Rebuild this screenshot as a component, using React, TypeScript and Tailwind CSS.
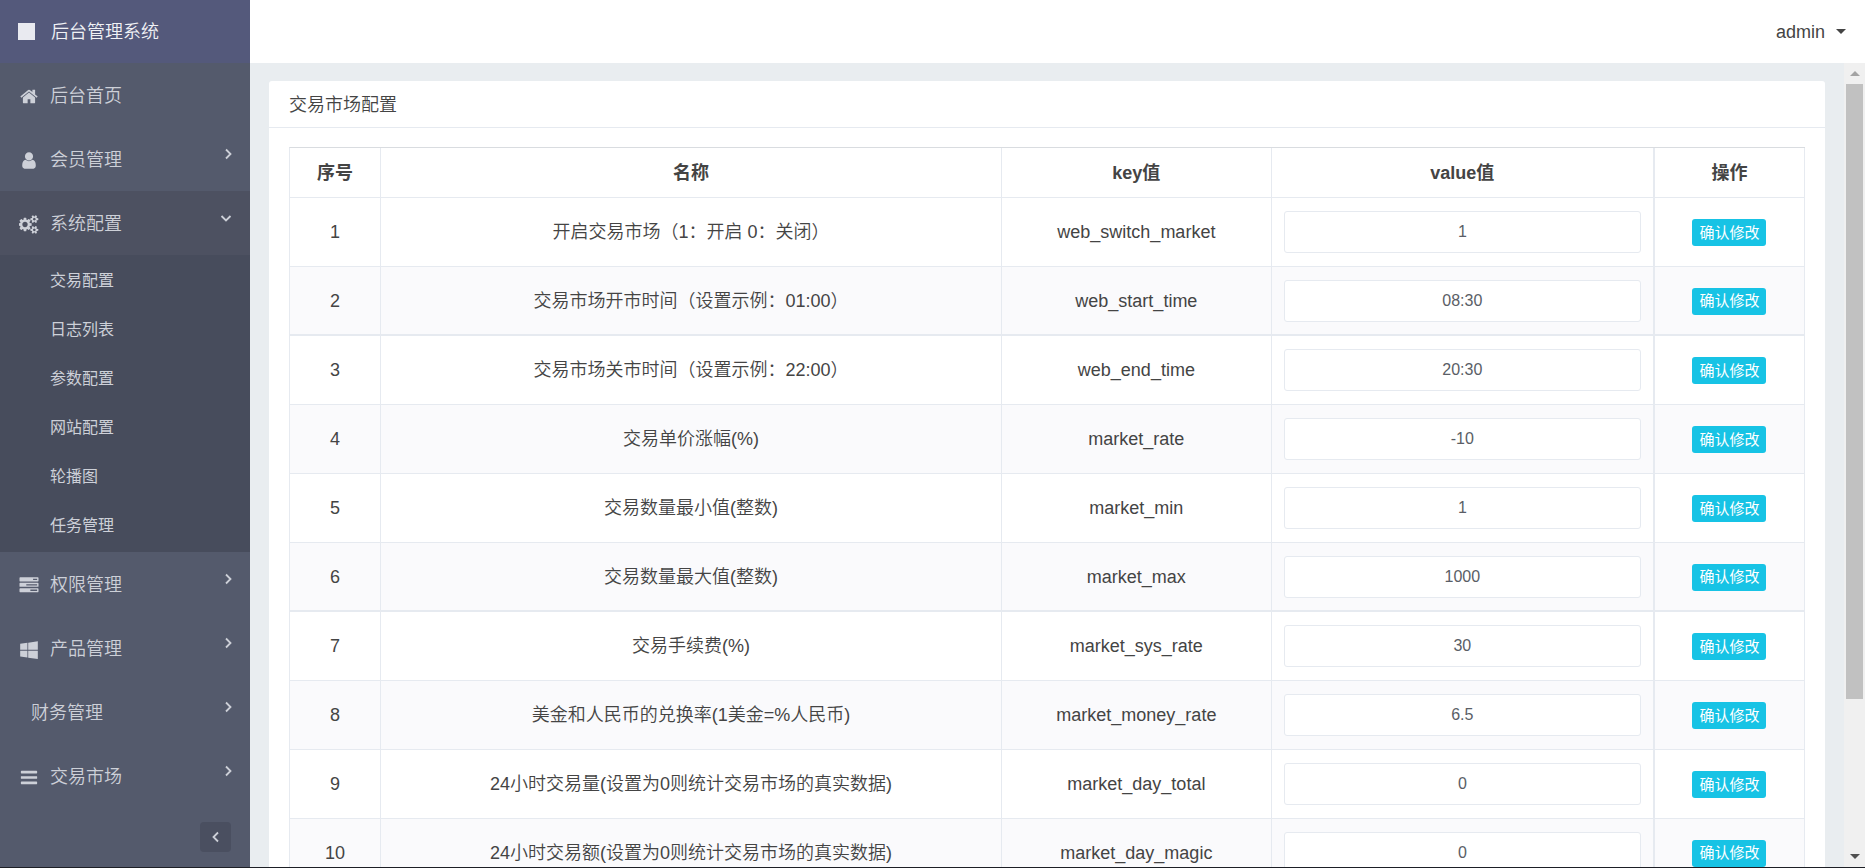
import React, { useState } from "react";

const FONT =
  "font-['Liberation_Sans','Noto_Sans_CJK_SC',sans-serif]";

function Glyph({ d, viewBox = "0 0 1792 1792" }: { d: string; viewBox?: string }) {
  return (
    <svg viewBox={viewBox} className="h-[19px] w-5 shrink-0" fill="currentColor" aria-hidden="true">
      <path d={d} />
    </svg>
  );
}

const HOME =
  "M1472 992v480q0 26-19 45t-45 19h-384v-384h-256v384h-384q-26 0-45-19t-19-45v-480q0-1 .5-3t.5-3l575-474 575 474q1 2 1 6zm223-69l-62 74q-8 9-21 11h-3q-13 0-21-7l-692-577-692 577q-12 8-24 7-13-2-21-11l-62-74q-8-10-7-23.5t11-21.5l719-599q32-26 76-26t76 26l244 204v-195q0-14 9-23t23-9h192q14 0 23 9t9 23v408l219 182q10 8 11 21.5t-7 23.5z";
const USER =
  "M1536 1399q0 109-62.5 187t-150.5 78h-854q-88 0-150.5-78t-62.5-187q0-85 8.5-160.5t31.5-152 58.5-131 94-89 134.5-34.5q131 128 313 128t313-128q76 0 134.5 34.5t94 89 58.5 131 31.5 152 8.5 160.5zm-256-887q0 159-112.5 271.5t-271.5 112.5-271.5-112.5-112.5-271.5 112.5-271.5 271.5-112.5 271.5 112.5 112.5 271.5z";
const COGS =
  "M832 896q0-106-75-181t-181-75-181 75-75 181 75 181 181 75 181-75 75-181zm768 512q0-52-38-90t-90-38-90 38-38 90q0 53 37.5 90.5t90.5 37.5 90.5-37.5 37.5-90.5zm0-1024q0-52-38-90t-90-38-90 38-38 90q0 53 37.5 90.5t90.5 37.5 90.5-37.5 37.5-90.5zm-384 421v185q0 10-7 19.5t-16 10.5l-155 24q-11 35-32 76 34 48 90 115 7 11 7 20 0 12-7 19-23 30-82.5 89.5t-78.5 59.5q-11 0-21-7l-115-90q-37 19-77 31-11 108-23 155-7 24-30 24h-186q-11 0-20-7.5t-10-17.5l-23-153q-34-10-75-31l-118 89q-7 7-20 7-11 0-21-8-144-133-144-160 0-9 7-19 10-14 41-53t47-61q-23-44-35-82l-152-24q-10-1-17-9.5t-7-19.5v-185q0-10 7-19.5t16-10.5l155-24q11-35 32-76-34-48-90-115-7-11-7-20 0-12 7-20 22-30 82-89t79-59q11 0 21 7l115 90q34-18 77-32 11-108 23-154 7-24 30-24h186q11 0 20 7.5t10 17.5l23 153q34 10 75 31l118-89q8-7 20-7 11 0 21 8 144 133 144 160 0 8-7 19-12 16-42 54t-45 60q23 48 34 82l152 23q10 2 17 10.5t7 19.5zm640 533v140q0 16-149 31-12 27-30 52 51 113 51 138 0 4-4 7-122 71-124 71-8 0-46-47t-52-68q-20 2-30 2t-30-2q-14 21-52 68t-46 47q-2 0-124-71-4-3-4-7 0-25 51-138-18-25-30-52-149-15-149-31v-140q0-16 149-31 13-29 30-52-51-113-51-138 0-4 4-7 4-2 35-20t59-34 30-16q8 0 46 46.5t52 67.5q20-2 30-2t30 2q51-71 92-112l6-2q4 0 124 70 4 3 4 7 0 25-51 138 17 23 30 52 149 15 149 31zm0-1024v140q0 16-149 31-12 27-30 52 51 113 51 138 0 4-4 7-122 71-124 71-8 0-46-47t-52-68q-20 2-30 2t-30-2q-14 21-52 68t-46 47q-2 0-124-71-4-3-4-7 0-25 51-138-18-25-30-52-149-15-149-31v-140q0-16 149-31 13-29 30-52-51-113-51-138 0-4 4-7 4-2 35-20t59-34 30-16q8 0 46 46.5t52 67.5q20-2 30-2t30 2q51-71 92-112l6-2q4 0 124 70 4 3 4 7 0 25-51 138 17 23 30 52 149 15 149 31z";
const TASKS =
  "M1024 1408h640v-128h-640v128zm-384-512h1024v-128h-1024v128zm640-512h384v-128h-384v128zm512 832v256q0 26-19 45t-45 19h-1664q-26 0-45-19t-19-45v-256q0-26 19-45t45-19h1664q26 0 45 19t19 45zm0-512v256q0 26-19 45t-45 19h-1664q-26 0-45-19t-19-45v-256q0-26 19-45t45-19h1664q26 0 45 19t19 45zm0-512v256q0 26-19 45t-45 19h-1664q-26 0-45-19t-19-45v-256q0-26 19-45t45-19h1664q26 0 45 19t19 45z";
const WINDOWS =
  "M746 1006v651l-682-94v-557h682zm0-743v659h-682v-565zm982 743v786l-907-125v-661h907zm0-878v794h-907v-669z";
const BARS =
  "M1664 1344v128q0 26-19 45t-45 19h-1408q-26 0-45-19t-19-45v-128q0-26 19-45t45-19h1408q26 0 45 19t19 45zm0-512v128q0 26-19 45t-45 19h-1408q-26 0-45-19t-19-45v-128q0-26 19-45t45-19h1408q26 0 45 19t19 45zm0-512v128q0 26-19 45t-45 19h-1408q-26 0-45-19t-19-45v-128q0-26 19-45t45-19h1408q26 0 45 19t19 45z";

type Item = { label: string; icon?: string; viewBox?: string; arrow?: boolean; children?: string[] };

const MENU: Item[] = [
  { label: "后台首页", icon: HOME },
  { label: "会员管理", icon: USER, arrow: true },
  {
    label: "系统配置",
    icon: COGS,
    viewBox: "0 0 1920 1792",
    arrow: true,
    children: ["交易配置", "日志列表", "参数配置", "网站配置", "轮播图", "任务管理"],
  },
  { label: "权限管理", icon: TASKS, arrow: true },
  { label: "产品管理", icon: WINDOWS, arrow: true },
  { label: "财务管理", arrow: true },
  { label: "交易市场", icon: BARS, arrow: true },
];

const ROWS: [string, string, string][] = [
  ["开启交易市场（1：开启 0：关闭）", "web_switch_market", "1"],
  ["交易市场开市时间（设置示例：01:00）", "web_start_time", "08:30"],
  ["交易市场关市时间（设置示例：22:00）", "web_end_time", "20:30"],
  ["交易单价涨幅(%)", "market_rate", "-10"],
  ["交易数量最小值(整数)", "market_min", "1"],
  ["交易数量最大值(整数)", "market_max", "1000"],
  ["交易手续费(%)", "market_sys_rate", "30"],
  ["美金和人民币的兑换率(1美金=%人民币)", "market_money_rate", "6.5"],
  ["24小时交易量(设置为0则统计交易市场的真实数据)", "market_day_total", "0"],
  ["24小时交易额(设置为0则统计交易市场的真实数据)", "market_day_magic", "0"],
];

function Angle({ dir }: { dir: "right" | "down" | "left" }) {
  const d = dir === "right" ? "M4 1.5 8.5 6 4 10.5" : dir === "left" ? "M8 1.5 3.5 6 8 10.5" : "M-.5 4 4 8.5 8.5 4";
  return (
    <svg viewBox="0 0 12 12" className="size-3 overflow-visible" fill="none" stroke="currentColor" strokeWidth="1.8" aria-hidden="true">
      <path d={d} />
    </svg>
  );
}

function Sidebar() {
  return (
    <aside className="flex w-[250px] shrink-0 flex-col bg-[#545a6c] text-[#cdd0d8]">
      <a href="#" className="flex h-[63px] shrink-0 items-center gap-4 bg-[#54597b] pl-[18px] text-lg text-[#f0f1f5]">
        <span className="size-[17px] bg-[#e9eaf0]" />
        后台管理系统
      </a>
      <nav>
        <ul>
          {MENU.map((m) => (
            <li key={m.label} className={m.children ? "bg-[#4d5161]" : ""}>
              <a href="#" className={`flex h-16 items-center gap-[11px] pt-0.5 pr-4 text-lg ${m.icon ? "pl-[19px]" : "pl-[31px]"}`}>
                {m.icon && <Glyph d={m.icon} viewBox={m.viewBox} />}
                <span className="flex-1">{m.label}</span>
                {m.arrow && (
                  <span className="pb-3">
                    <Angle dir={m.children ? "down" : "right"} />
                  </span>
                )}
              </a>
              {m.children && (
                <ul className="bg-[#474c5c] pt-px pb-0.5">
                  {m.children.map((c) => (
                    <li key={c}>
                      <a href="#" className="flex h-[49px] items-center pl-[50px] text-base font-normal">
                        {c}
                      </a>
                    </li>
                  ))}
                </ul>
              )}
            </li>
          ))}
        </ul>
      </nav>
      <div className="mt-auto flex justify-end pr-[19px] pb-[15px]">
        <button type="button" aria-label="收起菜单" className="flex h-[30px] w-[31px] items-center justify-center rounded-sm bg-[#4a4f60]">
          <Angle dir="left" />
        </button>
      </div>
    </aside>
  );
}

function ConfigRow({ index, row }: { index: number; row: [string, string, string] }) {
  const [value, setValue] = useState(row[2]);
  const cell = `border-r border-[#e6eaf0] ${index % 4 === 1 ? "border-b-2" : "border-b"}`;
  return (
    <tr className={`h-[69px] ${index % 2 ? "bg-[#fafafc]" : "bg-white"}`}>
      <td className={cell}>{index + 1}</td>
      <td className={cell}>{row[0]}</td>
      <td className={cell}>{row[1]}</td>
      <td className={`${cell} border-r-2 px-3`}>
        <input
          aria-label={row[1]}
          value={value}
          onChange={(e) => setValue(e.target.value)}
          className="block h-[42px] w-full rounded-[3px] border border-[#e6eaf0] bg-white text-center text-base text-[#5a5e66] outline-none"
        />
      </td>
      <td className={cell}>
        <button type="button" className="h-[27px] rounded-[3px] bg-[#17c3e5] px-[7px] align-middle text-[15px] leading-[26px] font-normal text-white">
          确认修改
        </button>
      </td>
    </tr>
  );
}

export default function App() {
  const th = "border-r border-b border-[#e6eaf0] font-bold";
  return (
    <div className={`flex h-screen overflow-hidden border-b border-[#1d1f26] font-[350] text-[#444] ${FONT}`}>
      <Sidebar />
      <div className="flex min-w-0 flex-1 flex-col">
        <header className="flex h-[63px] shrink-0 items-center justify-end bg-white pr-[19px]">
          <button type="button" className="flex items-center gap-[11px] text-lg">
            admin
            <svg viewBox="0 0 10 5" className="h-[5px] w-2.5" fill="currentColor" aria-hidden="true">
              <path d="M0 0h10L5 5z" />
            </svg>
          </button>
        </header>
        <div className="flex min-h-0 flex-1">
          <main className="min-w-0 flex-1 overflow-hidden bg-[#e9edf0] px-[19px] pt-[18px]">
            <section className="rounded-[3px] bg-white">
              <h1 className="flex h-[47px] items-center border-b border-[#e6eaf0] px-5 pt-0.5 text-lg font-[350]">交易市场配置</h1>
              <div className="px-5 py-[19px]">
                <table className="w-full table-fixed border-separate border-spacing-0 border-t border-l border-t-[#d9dce0] border-l-[#e6eaf0] text-center text-lg">
                  <colgroup>
                    <col className="w-[6%]" />
                    <col className="w-[41%]" />
                    <col className="w-[17.8%]" />
                    <col className="w-[25.3%]" />
                    <col />
                  </colgroup>
                  <thead>
                    <tr className="h-[50px]">
                      <th className={th}>序号</th>
                      <th className={th}>名称</th>
                      <th className={th}>key值</th>
                      <th className={`${th} border-r-2`}>value值</th>
                      <th className={th}>操作</th>
                    </tr>
                  </thead>
                  <tbody>
                    {ROWS.map((r, i) => (
                      <ConfigRow key={r[1]} index={i} row={r} />
                    ))}
                  </tbody>
                </table>
              </div>
            </section>
          </main>
          <div className="flex w-[21px] shrink-0 flex-col items-center bg-[#f0f0f0]" aria-hidden="true">
            <div className="flex h-[21px] shrink-0 items-center text-[#a3a3a3]">
              <svg viewBox="0 0 10 5" className="h-[5px] w-2.5" fill="currentColor">
                <path d="M5 0l5 5H0z" />
              </svg>
            </div>
            <div className="w-full flex-1 px-0.5">
              <div className="h-[80.7%] bg-[#c1c1c1]" />
            </div>
            <div className="flex h-[21px] shrink-0 items-center text-[#505050]">
              <svg viewBox="0 0 10 5" className="h-[5px] w-2.5" fill="currentColor">
                <path d="M0 0h10L5 5z" />
              </svg>
            </div>
          </div>
        </div>
      </div>
    </div>
  );
}
